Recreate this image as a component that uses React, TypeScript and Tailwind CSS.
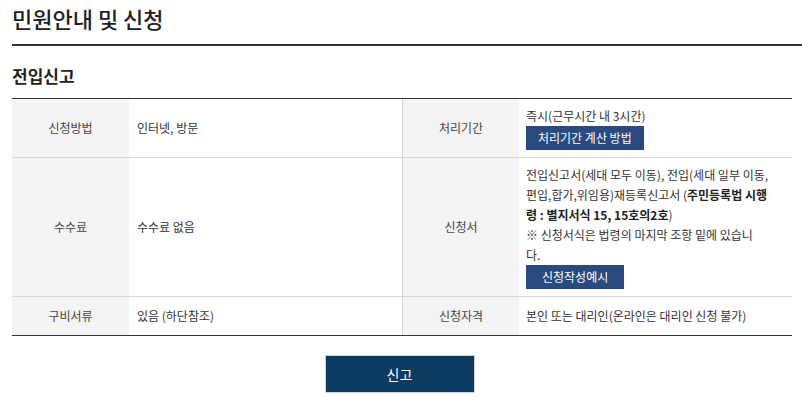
const font = { fontFamily: '"Noto Sans CJK KR", "Noto Sans", sans-serif' };

const Label = ({ children, first }: { children: React.ReactNode; first?: boolean }) => (
  <div
    className={
      "flex items-center justify-center bg-[#f4f4f4] text-[12px] text-[#444]" +
      (first ? "" : " border-l border-[#d6d6d6]")
    }
  >
    {children}
  </div>
);

const SmallButton = ({ children, wide }: { children: React.ReactNode; wide?: boolean }) => (
  <button
    className={
      "h-6 bg-[#284a7e] text-[12px] leading-6 text-white" + (wide ? " px-4" : " px-3")
    }
  >
    {children}
  </button>
);

export default function App() {
  return (
    <div className="w-[802px] bg-white pl-3 text-[#333]" style={font}>
      <h1 className="pt-[3px] text-[22px] font-medium leading-[30px] text-[#222]">민원안내 및 신청</h1>
      <div className="mt-[11px] h-[2px] bg-[#333]" />

      <h2 className="mt-[18px] text-[17px] font-semibold leading-6 text-[#222]">전입신고</h2>

      <div className="mt-[10px] w-[780px] border-t border-b border-[#333]">
        <div className="grid grid-cols-[117px_273px_117px_273px] border-b border-[#d6d6d6]">
          <Label first>신청방법</Label>
          <div className="flex items-center pl-2 text-[12px]">인터넷, 방문</div>
          <Label>처리기간</Label>
          <div className="flex flex-col items-start py-[7px] pl-[7px] text-[12px] leading-5">
            <span>즉시(근무시간 내 3시간)</span>
            <SmallButton>처리기간 계산 방법</SmallButton>
          </div>
        </div>

        <div className="grid grid-cols-[117px_273px_117px_273px] border-b border-[#d6d6d6]">
          <Label first>수수료</Label>
          <div className="flex items-center pl-2 text-[12px]">수수료 없음</div>
          <Label>신청서</Label>
          <div className="flex flex-col items-start py-[7px] pl-[7px] text-[12px] leading-5">
            <span className="whitespace-nowrap">전입신고서(세대 모두 이동), 전입(세대 일부 이동,</span>
            <span className="whitespace-nowrap">
              편입,합가,위임용)재등록신고서 (<b className="font-bold text-[#222]">주민등록법 시행</b>
            </span>
            <span className="whitespace-nowrap">
              <b className="font-bold text-[#222]">령 : 별지서식 15, 15호의2호</b>)
            </span>
            <span className="whitespace-nowrap">※ 신청서식은 법령의 마지막 조항 밑에 있습니</span>
            <span>다.</span>
            <SmallButton wide>신청작성예시</SmallButton>
          </div>
        </div>

        <div className="grid h-[38px] grid-cols-[117px_273px_117px_273px]">
          <Label first>구비서류</Label>
          <div className="flex items-center pl-2 text-[12px]">있음 (하단참조)</div>
          <Label>신청자격</Label>
          <div className="flex items-center pl-[7px] text-[12px]">
            본인 또는 대리인(온라인은 대리인 신청 불가)
          </div>
        </div>
      </div>

      <div className="mt-[19px] flex w-[775px] justify-center">
        <button className="h-[38px] w-[150px] border border-[#d4d4d4] bg-[#0d3a61] text-[14px] text-white">
          신고
        </button>
      </div>
    </div>
  );
}
